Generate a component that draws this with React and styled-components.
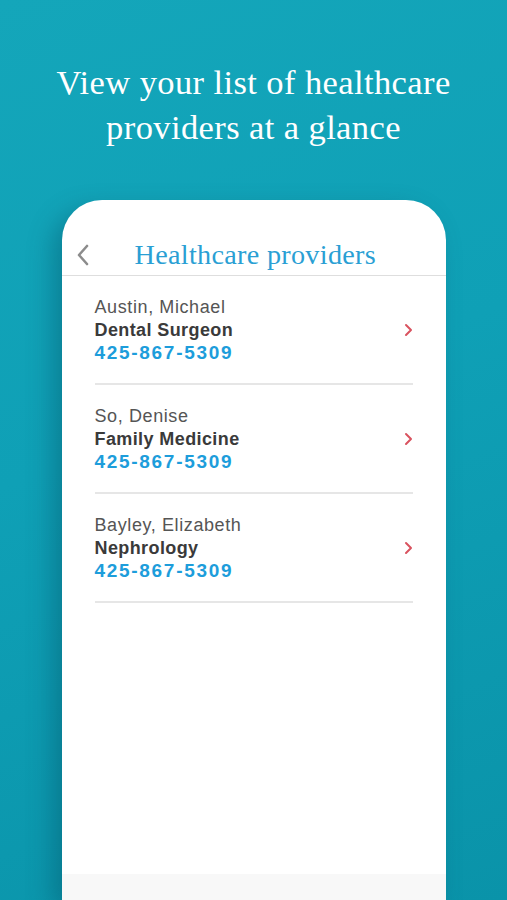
import React from 'react';
import styled, { createGlobalStyle } from 'styled-components';

const GlobalStyle = createGlobalStyle`
  html, body {
    margin: 0;
    padding: 0;
  }
  body {
    background: #0f9cb2;
    font-family: "Liberation Sans", Arial, sans-serif;
  }
`;

const Screen = styled.div`
  width: 507px;
  height: 900px;
  overflow: hidden;
  display: flex;
  flex-direction: column;
  align-items: center;
  background: linear-gradient(160deg, #14a6ba 0%, #0fa0b6 45%, #0a93a9 100%);
`;

const Headline = styled.h1`
  margin: 60px 0 0;
  color: #fff;
  font-family: "Liberation Serif", "DejaVu Serif", serif;
  font-weight: normal;
  font-size: 34.5px;
  line-height: 45px;
  text-align: center;
  letter-spacing: 0.4px;
`;

const Phone = styled.div`
  margin-top: 50px;
  width: 384px;
  flex: 1;
  background: #fff;
  border-radius: 40px 40px 0 0;
  box-shadow: -10px 10px 24px rgba(0, 70, 90, 0.35);
  display: flex;
  flex-direction: column;
`;

const NavBar = styled.div`
  height: 76px;
  display: flex;
  align-items: flex-end;
  padding: 0 0 4px 14px;
  box-sizing: border-box;
  border-bottom: 1px solid #dedede;
`;

const BackButton = styled.div`
  width: 20px;
  height: 32px;
  display: flex;
  align-items: center;
  color: #8c8c8c;
`;

const Title = styled.div`
  margin-left: 39px;
  color: #2a9fd4;
  font-family: "Liberation Serif", "DejaVu Serif", serif;
  font-size: 28.2px;
  line-height: 32px;
  letter-spacing: 0.3px;
`;

const List = styled.div`
  flex: 1;
  display: flex;
  flex-direction: column;
  padding: 0 33px 0 33px;
`;

const Row = styled.div`
  display: flex;
  align-items: center;
  justify-content: space-between;
  padding: 20px 0 19px;
  border-bottom: 2px solid #e6e6e6;
`;

const Info = styled.div`
  display: flex;
  flex-direction: column;
`;

const Name = styled.div`
  color: #555;
  font-size: 18px;
  line-height: 22.5px;
  letter-spacing: 0.6px;
`;

const Specialty = styled.div`
  color: #3a3a3a;
  font-size: 18px;
  font-weight: bold;
  line-height: 22.5px;
  letter-spacing: 0.4px;
`;

const PhoneNumber = styled.div`
  color: #1d9ddb;
  font-size: 19px;
  font-weight: bold;
  line-height: 23px;
  letter-spacing: 1.7px;
`;

const Chevron = styled.div`
  display: flex;
  color: #d9535f;
`;

const Footer = styled.div`
  height: 26px;
  background: #f8f8f8;
`;

const providers = [
  { name: 'Austin, Michael', specialty: 'Dental Surgeon', phone: '425-867-5309' },
  { name: 'So, Denise', specialty: 'Family Medicine', phone: '425-867-5309' },
  { name: 'Bayley, Elizabeth', specialty: 'Nephrology', phone: '425-867-5309' },
];

export default function App() {
  return (
    <Screen>
      <GlobalStyle />
      <Headline>
        View your list of healthcare
        <br />
        providers at a glance
      </Headline>
      <Phone>
        <NavBar>
          <BackButton>
            <svg width="14" height="22" viewBox="0 0 14 22" fill="none">
              <path d="M11 2 L3 11 L11 20" stroke="currentColor" strokeWidth="2.6" strokeLinecap="round" strokeLinejoin="round" />
            </svg>
          </BackButton>
          <Title>Healthcare providers</Title>
        </NavBar>
        <List>
          {providers.map((p) => (
            <Row key={p.name}>
              <Info>
                <Name>{p.name}</Name>
                <Specialty>{p.specialty}</Specialty>
                <PhoneNumber>{p.phone}</PhoneNumber>
              </Info>
              <Chevron>
                <svg width="9" height="14" viewBox="0 0 9 14" fill="none">
                  <path d="M2 2 L7 7 L2 12" stroke="currentColor" strokeWidth="2" strokeLinecap="round" strokeLinejoin="round" />
                </svg>
              </Chevron>
            </Row>
          ))}
        </List>
        <Footer />
      </Phone>
    </Screen>
  );
}
